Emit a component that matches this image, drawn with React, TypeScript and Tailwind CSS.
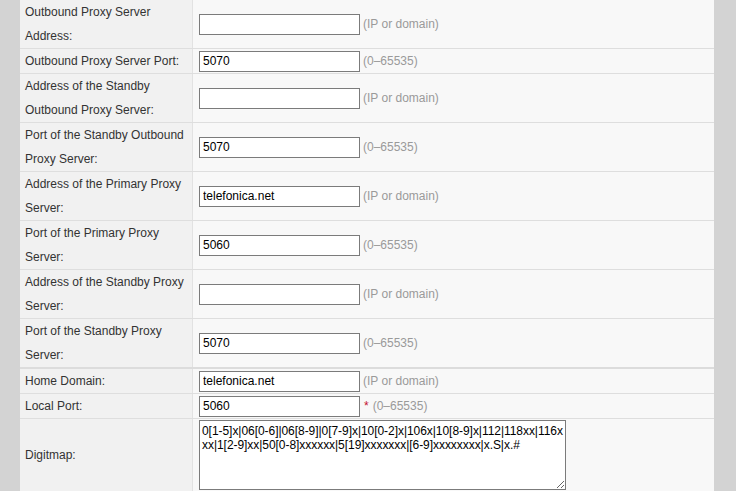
import React from "react";

type Row = {
  label: string[];
  value?: string;
  hint?: string;
  star?: boolean;
  thick?: boolean;
};

const rows: Row[] = [
  { label: ["Outbound Proxy Server", "Address:"], value: "", hint: "(IP or domain)" },
  { label: ["Outbound Proxy Server Port:"], value: "5070", hint: "(0–65535)" },
  { label: ["Address of the Standby", "Outbound Proxy Server:"], value: "", hint: "(IP or domain)" },
  { label: ["Port of the Standby Outbound", "Proxy Server:"], value: "5070", hint: "(0–65535)" },
  { label: ["Address of the Primary Proxy", "Server:"], value: "telefonica.net", hint: "(IP or domain)" },
  { label: ["Port of the Primary Proxy", "Server:"], value: "5060", hint: "(0–65535)" },
  { label: ["Address of the Standby Proxy", "Server:"], value: "", hint: "(IP or domain)" },
  { label: ["Port of the Standby Proxy", "Server:"], value: "5070", hint: "(0–65535)", thick: true },
  { label: ["Home Domain:"], value: "telefonica.net", hint: "(IP or domain)" },
  { label: ["Local Port:"], value: "5060", hint: "(0–65535)", star: true },
];

const digitmap =
  "0[1-5]x|06[0-6]|06[8-9]|0[7-9]x|10[0-2]x|106x|10[8-9]x|112|118xx|116xxx|1[2-9]xx|50[0-8]xxxxxx|5[19]xxxxxxx|[6-9]xxxxxxxx|x.S|x.#";

export default function App() {
  return (
    <div
      className="flex w-[736px] h-[491px] overflow-hidden bg-[#d3d3d3] text-[12px] text-[#333]"
      style={{ fontFamily: '"Liberation Sans", Arial, sans-serif' }}
    >
      <div className="ml-[20px] w-[694px] flex flex-col">
        {rows.map((r, i) => (
          <div
            key={i}
            className={`grid grid-cols-[173px_1fr] ${
              r.thick ? "border-b-2 border-[#dcdcdc]" : "border-b border-[#dedede]"
            }`}
          >
            <div className="bg-[#f1f1f1] border-r border-[#e2e2e2] pl-[5px] leading-[24px]">
              {r.label.map((l, j) => (
                <div key={j}>{l}</div>
              ))}
            </div>
            <div className="bg-[#f8f8f8] flex items-center pl-[6px]">
              <input
                readOnly
                value={r.value}
                className="w-[161px] h-[21px] border border-[#7b7b7b] bg-white px-[3px] text-[12px] text-black outline-none"
                style={{ fontFamily: '"Liberation Sans", Arial, sans-serif' }}
              />
              {r.star && <span className="ml-[4px] text-[#c4122f]">*</span>}
              <span className={`${r.star ? "ml-[4px]" : "ml-[3px]"} text-[#9a9a9a]`}>{r.hint}</span>
            </div>
          </div>
        ))}
        <div className="grid grid-cols-[173px_1fr] flex-1">
          <div className="bg-[#f1f1f1] border-r border-[#e2e2e2] pl-[5px] flex items-center h-[72px]">
            Digitmap:
          </div>
          <div className="bg-[#f8f8f8] pl-[6px] pt-[1px]">
            <textarea
              readOnly
              value={digitmap}
              className="block w-[367px] h-[70px] border border-[#7b7b7b] bg-white pl-[2px] pr-[2px] py-[3px] text-[12px] leading-[14px] tracking-[-0.05px] text-black outline-none resize [word-break:break-all]"
              style={{ fontFamily: '"Liberation Sans", Arial, sans-serif' }}
            />
          </div>
        </div>
      </div>
    </div>
  );
}
